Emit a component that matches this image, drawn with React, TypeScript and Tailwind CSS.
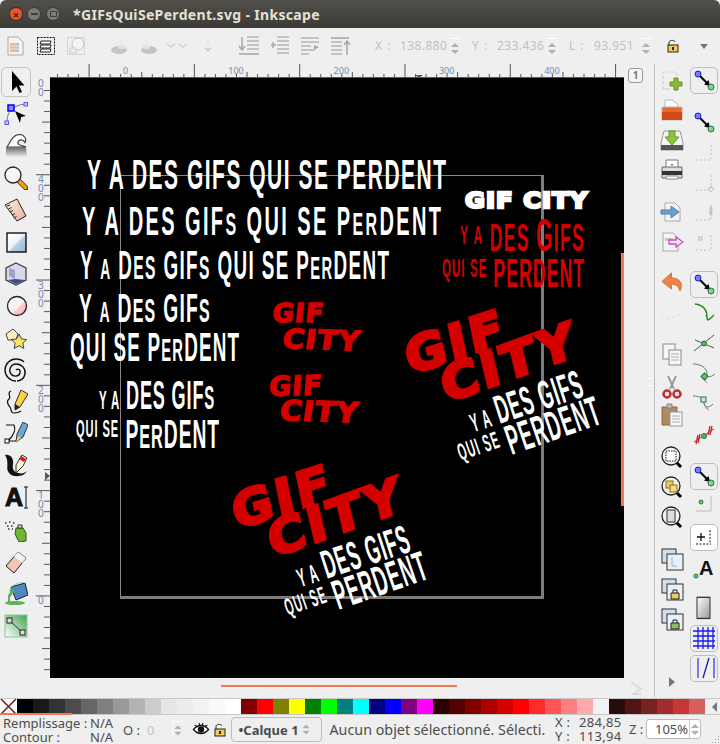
import { ReactNode } from "react";

const sans = "font-['Noto_Sans',sans-serif]";
// condensed poster lettering, squeezed from Liberation Sans Bold
const poster = "absolute whitespace-nowrap origin-top-left font-bold leading-none font-['Liberation_Sans',sans-serif]";
const logo = "absolute whitespace-nowrap origin-top-left font-bold leading-none font-['DejaVu_Sans',sans-serif] text-[#d40000]";
const bigLogo = `${logo} text-[48px] tracking-[3px] [-webkit-text-stroke:3px_#d40000] -skew-x-[6deg]`;
const smallLogo = `${logo} tracking-[1px] [-webkit-text-stroke:1.5px_#d40000]`;

const Ic = ({ children }: { children: ReactNode }) => (
  <svg width="24" height="24" viewBox="0 0 24 24" fill="none">
    {children}
  </svg>
);

const Doc = ({ x = 4 }: { x?: number }) => (
  <path d={`M${x} 3h10l5 5v13H${x}z`} fill="#f4f4f4" stroke="#aaa" />
);

const Lines = () => (
  <g stroke="#b5b5b5" strokeWidth="1.5">
    <path d="M9 3h12M9 7h12M9 11h12M9 15h12" />
  </g>
);

const toolbarIcons = [
  { cls: "ml-[4px]", el: <Ic><Doc /><path d="M6 9h9v9H6z" fill="#d9bdaa" /><path d="M6 12h9M6 15h9" stroke="#f2e6dc" /></Ic> },
  { cls: "ml-[6px]", el: <Ic><rect x="3.5" y="3.5" width="17" height="17" stroke="#111" strokeDasharray="2 1" /><path d="M7 7h10l-1 3H6zM7 11h10l-1 3H6zM7 15h10l-1 3H6z" fill="#fff" stroke="#222" /></Ic> },
  { cls: "ml-[6px]", el: <Ic><rect x="3.5" y="3.5" width="17" height="17" stroke="#c8c8c8" strokeDasharray="2 1" /><circle cx="14" cy="10" r="6" stroke="#c4c4c4" fill="#f4f4f4" /><path d="M6 14h6v5H6z" fill="#eee" stroke="#c8c8c8" /></Ic> },
  { cls: "ml-[20px]", el: <Ic><path d="M13 5c2 2 0 3 0 5" stroke="#ddd" /><ellipse cx="11" cy="16" rx="8" ry="4" fill="#c4c4c4" /><ellipse cx="14" cy="13" rx="4" ry="2" fill="#e2e2e2" /></Ic> },
  { cls: "ml-[4px]", el: <Ic><path d="M11 5c-2 2 0 3 0 5" stroke="#ddd" /><ellipse cx="13" cy="16" rx="8" ry="4" fill="#c4c4c4" /><ellipse cx="10" cy="13" rx="4" ry="2" fill="#e2e2e2" /></Ic> },
  { cls: "ml-[5px]", el: <Ic><path d="M2 10l4 3 4-3M14 10l4 3 4-3" stroke="#d0d0d0" strokeWidth="1.5" /></Ic> },
  { cls: "ml-[7px]", el: <Ic><path d="M12 6v6" stroke="#ddd" /><path d="M8 13l4 5 4-5-4 2z" fill="#c4c4c4" /></Ic> },
  { cls: "ml-[18px]", el: <Ic><Lines /><path d="M4 3v13M1 12l3 4 3-4" stroke="#a8a8a8" strokeWidth="1.5" /><path d="M1 20h20" stroke="#b5b5b5" strokeWidth="2" /></Ic> },
  { cls: "ml-[6px]", el: <Ic><Lines /><path d="M3 11h5M5 8v6" stroke="#a8a8a8" strokeWidth="1.5" /><path d="M9 19h12" stroke="#b5b5b5" strokeWidth="1.5" /></Ic> },
  { cls: "ml-[6px]", el: <Ic><path d="M3 4h18M3 8h18M3 12h10M3 16h14M3 20h8" stroke="#b5b5b5" strokeWidth="1.5" /><path d="M16 11l5 2-5 3z" fill="#a8a8a8" /></Ic> },
  { cls: "ml-[6px]", el: <Ic><path d="M3 4h18" stroke="#b5b5b5" strokeWidth="2" /><path d="M3 8h11M3 12h11M3 16h11M3 20h11" stroke="#b5b5b5" strokeWidth="1.5" /><path d="M19 21V8M16 11l3-4 3 4" stroke="#a8a8a8" strokeWidth="1.5" /></Ic> },
];

const toolIcons = [
  <Ic key="select"><path d="M8 1v20l4.500-4.500 3 6.500 2.500-1-3-6.500h5.500z" fill="#000" /></Ic>,
  <Ic key="node"><path d="M3 20C3 10 8 3 22 2" stroke="#777" /><rect x="4" y="3" width="6" height="6" fill="#8a8aff" stroke="#00f" strokeWidth="1.500" /><rect x="20" y="0.500" width="3.500" height="3.500" fill="#ccf" stroke="#55f" /><rect x="1" y="19" width="3.500" height="3.500" fill="#ccf" stroke="#55f" /><path d="M11 9l11 5-5 1-1 6z" fill="#000" /></Ic>,
  <Ic key="tweak"><defs><linearGradient id="tw" x1="0" y1="0" x2="0" y2="1"><stop offset="0" stopColor="#666" /><stop offset="1" stopColor="#eee" /></linearGradient></defs><path d="M3 13C6 9 8 1 15 0.500c5 0 8 4 6 8-1-3-6-4-7 0-1 2 3 3 8 4.500z" fill="#fff" stroke="#444" strokeWidth="1.200" /><path d="M2 13h20l1 10H2z" fill="url(#tw)" /></Ic>,
  <Ic key="zoom"><path d="M15 15l7 7" stroke="#333" strokeWidth="5" strokeLinecap="round" /><path d="M15.500 15.500l6 6" stroke="#eda21e" strokeWidth="3.500" strokeLinecap="round" /><circle cx="9" cy="9" r="8" fill="#f6f6f6" stroke="#222" strokeWidth="1.300" /></Ic>,
  <Ic key="measure"><defs><linearGradient id="me" x1="0" y1="0" x2="1" y2="1"><stop offset="0" stopColor="#f8f0ea" /><stop offset="1" stopColor="#f3a998" /></linearGradient></defs><path d="M1 7L13 1l9 17-9 5z" fill="url(#me)" stroke="#222" /><path d="M3 8l3-1M4.500 11l3-1.500M6 14l3-1.500M8 17l3-1.500M9.500 20l3-1.500" stroke="#222" /></Ic>,
  <Ic key="rect"><defs><linearGradient id="re" x1="0" y1="0" x2="1" y2="1"><stop offset="0" stopColor="#fff" /><stop offset=".5" stopColor="#eef3f8" /><stop offset=".55" stopColor="#bcd1e6" /><stop offset="1" stopColor="#8fb2d6" /></linearGradient></defs><rect x="3" y="3" width="19" height="19" fill="url(#re)" stroke="#000" strokeWidth="1.300" /></Ic>,
  <Ic key="box"><path d="M12 1l10 5v12l-10 5-10-5V6z" fill="#d8d8e8" stroke="#444" strokeWidth="1.300" /><path d="M5 6l6 2v9l-6-3z" fill="#9ca0cc" /><path d="M11 17l10 1-9 4-8-4z" fill="#3c4a94" /></Ic>,
  <Ic key="circle"><defs><linearGradient id="ci" x1="0" y1="0" x2="1" y2="1"><stop offset="0" stopColor="#fff" /><stop offset=".55" stopColor="#f6f0f0" /><stop offset=".62" stopColor="#fbc9c9" /><stop offset="1" stopColor="#f9a6a6" /></linearGradient></defs><circle cx="13" cy="12" r="9.500" fill="url(#ci)" stroke="#222" strokeWidth="1.300" /></Ic>,
  <Ic key="star"><path d="M2 8l7-5 5 5-2 6H4z" fill="#f9efc0" stroke="#444" /><path d="M15 8l2.500 5 5 .5-3.700 3.500 1 5.500-4.800-2.800-4.800 2.800 1-5.500-3.700-3.500 5-.5z" fill="#f5e56b" stroke="#444" /></Ic>,
  <Ic key="spiral"><path d="M12 12c2-2 5 0 4 3-1 4-7 4-9 1-3-4 0-10 5-10 6 0 10 5 9 10-1 5-5 7-8 7M12 23C6 23 1 18 1 12S6 1 12 1c4 0 6 1 8 3" stroke="#111" strokeWidth="1.400" /></Ic>,
  <Ic key="pencil"><path d="M7 1C2 3 8 7 5 9c-3 2-1 6 1 8 2 3 0 6 4 6 4 0 7-2 7-2" stroke="#111" strokeWidth="1.200" /><path d="M17 0l7 4-8 13-5 3 0-6z" fill="#f7d33e" stroke="#333" /><path d="M11 20l0-6 5 3z" fill="#222" /></Ic>,
  <Ic key="pen"><path d="M2 3h8c2 4 0 10-6 16h8" stroke="#111" strokeWidth="1.200" /><rect x="1" y="17" width="4" height="4" fill="#fff" stroke="#111" /><path d="M19 0l5 3-5 12-7 5 1-8z" fill="#6ca8d8" stroke="#333" /><path d="M12 20l2-6 3 2z" fill="#f0d050" /></Ic>,
  <Ic key="callig"><path d="M1 1c5-1 9 3 8 9-1 5 1 8 5 9 4 1 7 0 9-2-3 6-14 7-18 2C1 14 6 9 1 1z" fill="#111" /><path d="M18 1l5 3-4 8-7 7 0-8z" fill="#fff3da" stroke="#333" /><path d="M17 2l5 3-2 3-5-3z" fill="#c82020" /></Ic>,
  <Ic key="text"><text x="1" y="20" className="font-['Liberation_Sans',sans-serif] font-bold text-[25px]" fill="#111" stroke="#111" strokeWidth="1">A</text><path d="M20 1h4M22 1v21M20 22h4" stroke="#111" /></Ic>,
  <Ic key="spray"><path d="M12 10h7l3 5 0 8-7 1-4-8z" fill="#6fb53a" stroke="#2d5a12" /><path d="M14 7h4v3h-4z" fill="#ddd" stroke="#333" /><path d="M1 5h2M5 4h2M9 5h2M3 8h2M7 8h2M4 11h2M8 11h1" stroke="#333" strokeWidth="1.500" strokeDasharray="1.500 .5" /></Ic>,
  <Ic key="eraser"><path d="M2 16L14 2l8 6-12 15z" fill="#f6c4bb" stroke="#222" /><path d="M14 2l8 6-4 5-8-7z" fill="#f2f2f2" /></Ic>,
  <Ic key="bucket"><ellipse cx="11" cy="21" rx="10" ry="2" fill="#5fb05a" /><path d="M7 5l14-4 3 12-12 5z" fill="#4f88c0" stroke="#222" /><path d="M7 5c3-3 11-6 14-4" stroke="#9cc" /><path d="M7 5c-2 3 0 6-3 8v7h2v-5c3-2 2-5 5-4z" fill="#5fb05a" /></Ic>,
  <Ic key="grad"><defs><linearGradient id="gr" x1="0" y1="1" x2="1" y2="0"><stop offset="0" stopColor="#fff" /><stop offset="1" stopColor="#41a350" /></linearGradient></defs><rect x="1" y="1" width="22" height="22" fill="url(#gr)" stroke="#8cc596" /><path d="M6 7l12 11" stroke="#333" /><rect x="3" y="4" width="5" height="5" fill="#ddd" stroke="#222" /><rect x="16" y="16" width="5" height="5" fill="#ddd" stroke="#222" /></Ic>,
];

const ZoomLens = ({ children }: { children?: ReactNode }) => (
  <Ic>
    <path d="M16 17l5 5" stroke="#000" strokeWidth="3" />
    <circle cx="11" cy="11" r="9" fill="#f2f2f2" stroke="#222" strokeWidth="1.300" />
    {children}
  </Ic>
);

const Stack = ({ children }: { children?: ReactNode }) => (
  <Ic>
    <rect x="2" y="1" width="14" height="14" fill="#cfe0ee" stroke="#333" />
    <rect x="7" y="6" width="16" height="16" fill="#e9f1f7" stroke="#333" />
    {children}
  </Ic>
);

const commandIcons = [
  { cls: "mt-[4px]", el: <Ic><path d="M3 21V4h11l4 3" stroke="#ccc" strokeDasharray="3 2" /><path d="M3 21h7" stroke="#ccc" /><path d="M14 10h4v4h4v4h-4v4h-4v-4h-4v-4h4z" fill="#8cb83c" stroke="#668f22" /></Ic> },
  { cls: "mt-[6px]", el: <Ic><path d="M5 2h7l6 4v6H5z" fill="#fafafa" stroke="#bbb" /><path d="M2 9h20v13H2z" fill="#e8672a" stroke="#bbb" /><path d="M2 14h20v8H2z" fill="#d24a18" /></Ic> },
  { cls: "mt-[6px]", el: <Ic><path d="M4 3h16l3 12v7H1v-7z" fill="#f4f4f4" stroke="#999" /><path d="M1 17h22v5H1z" fill="#555" /><path d="M9 3h6v6h4l-7 8-7-8h4z" fill="#8fc23b" stroke="#5f9a1f" /></Ic> },
  { cls: "mt-[6px]", el: <Ic><path d="M6 2h12v8H6z" fill="#fff" stroke="#777" /><path d="M2 9h20v11H2z" fill="#ddd" stroke="#666" /><path d="M2 13h20v4H2z" fill="#333" /><path d="M6 18h12v3H6z" fill="#fff" stroke="#888" /><path d="M10 6h4l-2 2z" fill="#888" /></Ic> },
  { cls: "mt-[18px]", el: <Ic><Doc x={5} /><path d="M1 10h10V6l8 6-8 6v-4H1z" fill="#6c9fd0" stroke="#4f81b5" /></Ic> },
  { cls: "mt-[6px]", el: <Ic><Doc x={3} /><path d="M5 8h8v3H5z" fill="#d9bdaa" /><path d="M9 10h7V7l7 5-7 5v-3H9z" fill="#f4e4f4" stroke="#c44fc4" strokeWidth="1.300" /></Ic> },
  { cls: "mt-[17px]", el: <Ic><path d="M11 2L1 11l10 8v-5c4 0 7 1 9 7 3-6 2-13-9-14z" fill="#e9844a" stroke="#d96a28" transform="translate(1 0) scale(.95 .95)" /></Ic> },
  { cls: "mt-[8px]", el: <Ic><path d="M1 15h2M6 15h3M12 14h2M17 12h2M20 9h2" stroke="#d8d8d8" /></Ic> },
  { cls: "mt-[16px]", el: <Ic><rect x="3" y="1" width="12" height="15" fill="#f6f6f6" stroke="#8a8a8a" /><rect x="9" y="7" width="12" height="15" fill="#f6f6f6" stroke="#8a8a8a" /><path d="M11 11h8M11 14h8M11 17h8" stroke="#aaa" /></Ic> },
  { cls: "mt-[8px]", el: <Ic><path d="M8 1l6 13M16 1l-6 13" stroke="#999" strokeWidth="1.800" /><circle cx="7" cy="19" r="3.500" stroke="#c42c2c" strokeWidth="2.500" /><circle cx="17" cy="19" r="3.500" stroke="#c42c2c" strokeWidth="2.500" /></Ic> },
  { cls: "mt-[4px]", el: <Ic><path d="M2 4h15v18H2z" fill="#b08a62" stroke="#8a6a48" /><path d="M7 1h5v4H7z" fill="#bbb" stroke="#888" /><rect x="10" y="9" width="12" height="14" fill="#f7f7f7" stroke="#999" /><path d="M12 13h8M12 16h8M12 19h8" stroke="#aaa" /></Ic> },
  { cls: "mt-[18px]", el: <ZoomLens><rect x="6" y="6" width="10" height="10" fill="#fff" stroke="#222" strokeDasharray="1.500 1" /></ZoomLens> },
  { cls: "mt-[6px]", el: <ZoomLens><rect x="6" y="6" width="7" height="7" fill="#f0cf60" stroke="#8a6d20" /><rect x="10" y="10" width="7" height="7" fill="#f5dc80" stroke="#8a6d20" /></ZoomLens> },
  { cls: "mt-[6px]", el: <ZoomLens><rect x="7" y="5" width="8" height="12" fill="#ddd" stroke="#333" /></ZoomLens> },
  { cls: "mt-[19px]", el: <Stack><path d="M12 9v9h5" stroke="#8fb2d6" /></Stack> },
  { cls: "mt-[6px]", el: <Stack><path d="M11 15h8v6h-8z" fill="#f0cc60" stroke="#222" /><path d="M13 15v-3h4v3" stroke="#222" /></Stack> },
  { cls: "mt-[6px]", el: <Stack><path d="M11 15h8v6h-8z" fill="#8cc060" stroke="#222" /><path d="M13 15v-3h4v3" stroke="#222" /></Stack> },
  { cls: "mt-[38px]", el: <Ic><path d="M9 7v10l6-5z" fill="#777" /></Ic> },
];

const SnapArrow = () => (
  <Ic>
    <path d="M7 7l9 9" stroke="#000" strokeWidth="2" />
    <path d="M18 18l-6-1.500 4.500-4.500z" fill="#000" />
    <circle cx="6" cy="6" r="3" fill="#7a7aff" stroke="#1a1ad0" />
    <circle cx="19" cy="19" r="3" fill="#8fc7a0" stroke="#1d7a2c" />
  </Ic>
);

const Dashed = ({ children }: { children?: ReactNode }) => (
  <Ic>
    <path d="M4 20h15V5" stroke="#c0c0c0" strokeDasharray="2 2" />
    {children}
  </Ic>
);

const Boxed = ({ children, fill = "bg-[#efefef]" }: { children: ReactNode; fill?: string }) => (
  <div className={`w-[28px] h-[27px] flex items-center justify-center rounded-[5px] border border-[#bdbdbd] ${fill}`}>{children}</div>
);

const snapIcons = [
  { cls: "mt-[3px]", el: <Boxed><SnapArrow /></Boxed> },
  { cls: "mt-[16px]", el: <SnapArrow /> },
  { cls: "mt-[4px]", el: <Dashed /> },
  { cls: "mt-[4px]", el: <Dashed><path d="M19 16l3 3-3 3-3-3z" stroke="#bbb" /></Dashed> },
  { cls: "mt-[4px]", el: <Dashed><path d="M19 8v6" stroke="#c4c4c4" strokeWidth="3" strokeLinecap="round" /></Dashed> },
  { cls: "mt-[4px]", el: <Dashed><rect x="7" y="7" width="3" height="3" stroke="#bbb" /></Dashed> },
  { cls: "mt-[16px]", el: <Boxed><SnapArrow /></Boxed> },
  { cls: "mt-[3px]", el: <Ic><path d="M3 3c8 1 12 6 12 13 0 2 0 3 1 3 1 0 4-3 6-5M14 14l2 5" stroke="#1a8a1a" strokeWidth="1.300" /></Ic> },
  { cls: "mt-[4px]", el: <Ic><path d="M2 20l20-16M3 9l19 8" stroke="#555" /><circle cx="12" cy="12.500" r="2.500" fill="#5cae6a" stroke="#1d7a2c" /></Ic> },
  { cls: "mt-[4px]", el: <Ic><path d="M1 3c8 0 14 4 14 10 0 3 3 4 8 0M12 16c1 4 2 5 3 6" stroke="#777" /><rect x="10" y="13" width="5" height="5" transform="rotate(45 12.500 15.500)" fill="#6db87a" stroke="#1d7a2c" /></Ic> },
  { cls: "mt-[4px]", el: <Ic><path d="M1 5c6 0 11 2 11 7 0 4 4 6 9 1M12 12c1 4 3 6 5 7" stroke="#777" /><rect x="9" y="6" width="5" height="5" fill="#d6ecd6" stroke="#1d7a2c" /></Ic> },
  { cls: "mt-[6px]", el: <Ic><path d="M2 19l20-13" stroke="#555" /><path d="M6 12l-2 9M8 11l-2 9M18 3l-2 9M20 3l-2 9" stroke="#d02020" strokeWidth="1.300" /><circle cx="12" cy="13" r="2.500" fill="#5cae6a" stroke="#1d7a2c" /></Ic> },
  { cls: "mt-[15px]", el: <Boxed><SnapArrow /></Boxed> },
  { cls: "mt-[1px]", el: <Ic><circle cx="9" cy="11" r="2" fill="#7fc08a" stroke="#1d7a2c" /><path d="M4 20h15V5" stroke="#bbb" /></Ic> },
  { cls: "mt-[8px]", el: <Boxed fill="bg-white"><Ic><path d="M5 12h8M9 8v8" stroke="#111" strokeWidth="1.300" /><path d="M18 5v13M4 19h15" stroke="#111" strokeDasharray="2 1.500" /></Ic></Boxed> },
  { cls: "mt-[4px]", el: <Ic><text x="7" y="20" className="font-['Liberation_Sans',sans-serif] font-bold text-[20px]" fill="#111">A</text><circle cx="4" cy="21" r="2" fill="#7fc08a" stroke="#1d7a2c" /></Ic> },
  { cls: "mt-[15px]", el: <Ic><defs><linearGradient id="pg" x1="0" y1="0" x2="1" y2="1"><stop offset="0" stopColor="#fff" /><stop offset="1" stopColor="#999" /></linearGradient></defs><rect x="5" y="1" width="13" height="16" fill="url(#pg)" stroke="#333" transform="scale(1 1.320)" /></Ic> },
  { cls: "mt-[4px]", el: <Boxed><Ic><path d="M1 5h22M1 10h22M1 15h22M1 20h22M6 1v22M11 1v22M16 1v22M21 1v22" stroke="#1a1af0" strokeWidth="1.300" /></Ic></Boxed> },
  { cls: "mt-[4px]", el: <Boxed><Ic><path d="M6 2v20M22 2v20" stroke="#5a5af0" strokeWidth="1.600" /><path d="M11 22l6-20" stroke="#1a1aa0" strokeWidth="1.300" /></Ic></Boxed> },
];

const swatches = [
  "bg-[#000000]", "bg-[#1a1a1a]", "bg-[#333333]", "bg-[#4d4d4d]", "bg-[#666666]", "bg-[#808080]", "bg-[#999999]", "bg-[#b3b3b3]", "bg-[#cccccc]",
  "bg-[#e6e6e6]", "bg-[#ececec]", "bg-[#f2f2f2]", "bg-[#f9f9f9]", "bg-[#ffffff]",
  "bg-[#800000]", "bg-[#ff0000]", "bg-[#808000]", "bg-[#ffff00]", "bg-[#008000]", "bg-[#00ff00]", "bg-[#008080]", "bg-[#00ffff]", "bg-[#000080]", "bg-[#0000ff]", "bg-[#800080]", "bg-[#ff00ff]",
  "bg-[#2b0000]", "bg-[#550000]", "bg-[#800000]", "bg-[#aa0000]", "bg-[#d40000]", "bg-[#ff0000]", "bg-[#ff2a2a]", "bg-[#ff5555]", "bg-[#ff8080]", "bg-[#ffaaaa]", "bg-[#f2f2f2]",
  "bg-[#280b0b]", "bg-[#501616]", "bg-[#782121]", "bg-[#a02c2c]", "bg-[#c83737]", "bg-[#d35f5f]",
];

const range = (n: number) => Array.from({ length: n }, (_, i) => i);

// top ruler, x = 36..624
const TopRuler = () => (
  <svg width="588" height="14" className="block">
    <path d="M14 13.500H588" stroke="#555" />
    {range(57).map((i) => {
      const x = 21.5 + i * 10.53;
      const major = i % 10 === 3;
      return <path key={i} d={`M${x} ${major ? 0 : i % 5 === 3 ? 8 : 10}V14`} stroke="#555" />;
    })}
    <path d="M379 11h8l-4 3z" fill="#555" />
    {[0, 100, 200, 300, 400].map((v, i) => (
      <text key={v} x={87 + i * 105.3} y="10" className={`${sans} text-[9px]`} fill="#6d8db5">
        {v}
      </text>
    ))}
  </svg>
);

// left ruler, x = 36..50, y = 78..678
const LeftRuler = () => (
  <svg width="14" height="600" className="block shrink-0">
    {range(58).map((i) => {
      const y = 12.5 + i * 10.53;
      const major = i % 10 === 8;
      return <path key={i} d={major ? `M0 ${y}H14` : `M${i % 5 === 3 ? 6 : 8} ${y}H14`} stroke="#555" />;
    })}
    {[[96, "4"], [202, "3"], [307, "2"], [412, "1"]].map(([y, d]) => (
      <g key={d as string} className={`${sans} text-[10px]`} fill="#6d8db5">
        <text x="2" y={(y as number) + 9}>{d}</text>
        <text x="2" y={(y as number) + 18}>0</text>
        <text x="2" y={(y as number) + 27}>0</text>
      </g>
    ))}
    <text x="2" y="9" className={`${sans} text-[10px]`} fill="#6d8db5">0</text>
    <text x="2" y="18" className={`${sans} text-[10px]`} fill="#6d8db5">0</text>
    <text x="2" y="526" className={`${sans} text-[10px]`} fill="#6d8db5">0</text>
    <path d="M9 394l5 4-5 4z" fill="#555" />
  </svg>
);

const Spin = ({ dash = false }: { dash?: boolean }) => (
  <div className="flex flex-col items-center gap-[3px] w-[10px]">
    {dash && <div className="w-[10px] h-px bg-white mb-[1px]" />}
    <div className="w-0 h-0 border-x-[4px] border-x-transparent border-b-[4px] border-b-[#b0b0b0]" />
    <div className="w-0 h-0 border-x-[4px] border-x-transparent border-t-[4px] border-t-[#b0b0b0]" />
  </div>
);

const TinyLock = () => (
  <svg width="14" height="14" viewBox="0 0 14 14" fill="none">
    <path d="M3 6V3.500C3 1 8 .5 9 3" stroke="#222" />
    <rect x="2" y="6" width="10" height="7" fill="#f0cc50" stroke="#222" />
    <rect x="6" y="8" width="2" height="3" fill="#222" />
  </svg>
);

const Coord = ({ label, value, cls, valueCls }: { label: string; value: string; cls: string; valueCls: string }) => (
  <div className={`flex items-center ${cls}`}>
    <span className="w-[25px] tracking-[1px]">{label}</span>
    <span className={`${valueCls} tracking-[0.4px] whitespace-nowrap`}>{value}</span>
    <Spin dash />
  </div>
);

const Poster = () => (
  <>
    <div className={`${poster} text-white left-[37px] top-[76px] text-[42px] scale-x-[0.5] tracking-[3px]`}>Y A DES GIFS QUI SE PERDENT</div>
    <div className={`${poster} text-white left-[32px] top-[123px] text-[40px] scale-x-[0.5] tracking-[4.8px]`}>
      Y A DES GIF<span className="text-[32px]">S</span> QUI SE P<span className="text-[32px]">ER</span>DENT
    </div>
    <div className={`${poster} text-white left-[30px] top-[167px] text-[41px] scale-x-[0.46] tracking-[3px]`}>
      Y <span className="text-[30px]">A</span> D<span className="text-[34px]">ES</span> GIF<span className="text-[34px]">S</span> QUI SE P<span className="text-[32px]">ER</span>DENT
    </div>
    <div className={`${poster} text-white left-[29px] top-[210px] text-[41px] scale-x-[0.47] tracking-[2.7px]`}>
      Y <span className="text-[30px]">A</span> D<span className="text-[34px]">ES</span> GIF<span className="text-[34px]">S</span>
    </div>
    <div className={`${poster} text-white left-[20px] top-[249px] text-[41px] scale-x-[0.46] tracking-[2.6px]`}>
      QUI SE P<span className="text-[32px]">ER</span>DENT
    </div>
    <div className={`${poster} text-white left-[49px] top-[297px] text-[41px] scale-x-[0.44] tracking-[2px]`}>
      <span className="text-[26px]">Y A</span> DES GIF<span className="text-[34px]">S</span>
    </div>
    <div className={`${poster} text-white left-[26px] top-[336px] text-[40px] scale-x-[0.48] tracking-[2px]`}>
      <span className="text-[23px] align-[11px]">QUI SE</span> P<span className="text-[34px]">ER</span>DENT
    </div>

    <div className={`${logo} text-white tracking-[1px] [-webkit-text-stroke:2.5px_white] left-[415px] top-[112px] text-[22px] scale-x-[1.1]`}>GIF CITY</div>
    <div className={`${poster} text-[#d40000] left-[410px] top-[134px] text-[38px] scale-x-[0.46] tracking-[3px]`}>
      <span className="text-[26px] align-[7px]">Y A</span> DES <span className="text-[46px]">G</span>IFS
    </div>
    <div className={`${poster} text-[#d40000] left-[392px] top-[175px] text-[40px] scale-x-[0.44] tracking-[2.5px]`}>
      <span className="text-[26px] align-[10px]">QUI SE</span> PERDENT
    </div>

    <div className={`${smallLogo} left-[224px] top-[222px] text-[26px] -skew-x-[6deg]`}>GIF</div>
    <div className={`${smallLogo} left-[235px] top-[247px] text-[27px] scale-x-[1.08] rotate-[2deg] -skew-x-[6deg]`}>CITY</div>
    <div className={`${smallLogo} left-[220px] top-[295px] text-[27px] -rotate-[2deg] -skew-x-[6deg]`}>GIF</div>
    <div className={`${smallLogo} left-[232px] top-[319px] text-[28px] scale-x-[1.06] rotate-[2deg] -skew-x-[6deg]`}>CITY</div>

    <div className={`${bigLogo} left-[351px] top-[256px] -rotate-[18deg] scale-x-[1.05] [text-shadow:2px_2px_0_#a00000]`}>GIF</div>
    <div className={`${bigLogo} left-[386px] top-[285px] -rotate-[20deg] scale-x-[1.08] [text-shadow:2px_2px_0_#a00000]`}>CITY</div>
    <div className={`${poster} text-white left-[413px] top-[322px] text-[40px] scale-x-[0.45] tracking-[2px] -rotate-[18deg]`}>
      <span className="text-[26px]">Y A</span> DES GIFS
    </div>
    <div className={`${poster} text-white left-[403px] top-[360px] text-[42px] scale-x-[0.45] tracking-[2.5px] -rotate-[19deg]`}>
      <span className="text-[24px] align-[11px]">QUI SE</span> PERDENT
    </div>

    <div className={`${bigLogo} left-[178px] top-[411px] -rotate-[18deg] scale-x-[1.05]`}>GIF</div>
    <div className={`${bigLogo} left-[213px] top-[440px] -rotate-[20deg] scale-x-[1.08]`}>CITY</div>
    <div className={`${poster} text-white left-[240px] top-[477px] text-[40px] scale-x-[0.45] tracking-[2px] -rotate-[18deg]`}>
      <span className="text-[26px]">Y A</span> DES GIFS
    </div>
    <div className={`${poster} text-white left-[230px] top-[515px] text-[42px] scale-x-[0.45] tracking-[2.5px] -rotate-[19deg]`}>
      <span className="text-[24px] align-[11px]">QUI SE</span> PERDENT
    </div>
  </>
);

export default function App() {
  return (
    <div className={`w-[720px] h-[744px] overflow-hidden flex flex-col bg-[#efefef] text-[#4c4c4c] ${sans}`}>
      {/* title bar */}
      <div className="h-[28px] shrink-0 flex items-center rounded-t-[6px] bg-gradient-to-b from-[#504f4a] to-[#3c3b36]">
        <div className="ml-[9px] w-[14px] h-[14px] rounded-full bg-[#e9562b] border border-[#3a2a20] flex items-center justify-center text-[#3b2016] text-[11px] font-bold leading-none">×</div>
        <div className="ml-[4px] w-[14px] h-[14px] rounded-full bg-[#7c7b76] border border-[#3a3a36] flex items-center justify-center">
          <div className="w-[7px] h-[2px] bg-[#3f3e3a]" />
        </div>
        <div className="ml-[5px] w-[14px] h-[14px] rounded-full bg-[#7c7b76] border border-[#3a3a36] flex items-center justify-center">
          <div className="w-[7px] h-[6px] border border-[#3f3e3a]" />
        </div>
        <span className="ml-[13px] text-[14px] font-bold text-[#e4e0d6] tracking-[0.33px]">*GIFsQuiSePerdent.svg - Inkscape</span>
      </div>

      {/* command bar */}
      <div className="h-[36px] shrink-0 flex items-center relative">
        {toolbarIcons.map((t, i) => (
          <div key={i} className={t.cls}>{t.el}</div>
        ))}
        <div className="ml-[23px] flex items-center text-[12px] text-[#c9c0b8]">
          <Coord label="X :" value="138.880" cls="" valueCls="w-[50px]" />
          <Coord label="Y :" value="233.436" cls="ml-[12px]" valueCls="w-[50px]" />
          <Coord label="L :" value="93.951" cls="ml-[12px]" valueCls="w-[47px]" />
        </div>
        <div className="ml-[15px]"><TinyLock /></div>
        <div className="ml-[20px] w-0 h-0 border-x-[4px] border-x-transparent border-t-[5px] border-t-[#777]" />
      </div>

      {/* workspace */}
      <div className="h-[634px] shrink-0 flex">
        <div className="w-[36px] shrink-0 flex flex-col pt-[2px]">
          {toolIcons.map((el, i) => (
            <div key={i} className="w-[32px] h-[32px] flex items-center justify-center shrink-0">
              {i === 0 ? (
                <div className="w-[30px] h-[30px] flex items-center justify-center rounded-[5px] border border-[#c4c4c4]">{el}</div>
              ) : (
                el
              )}
            </div>
          ))}
        </div>

        <div className="w-[618px] shrink-0 flex flex-col">
          <div className="flex h-[14px]">
            <TopRuler />
            <div className="ml-[4px] mt-[4px] w-[15px] h-[15px] rounded-[3px] border border-[#999] bg-[#f4f4f4] text-[#777] text-[10px] leading-[13px] text-center font-bold z-10">1</div>
          </div>
          <div className="flex h-[600px]">
            <LeftRuler />
            <div className="relative w-[574px] h-[600px] bg-black overflow-hidden shrink-0">
              <div className="absolute left-[70px] top-[97px] w-[424px] h-[424px] border-l border-t border-l-[#888] border-t-[#888] border-r-[3px] border-b-[3px] border-r-[#7c7c7c] border-b-[#7c7c7c]" />
              <Poster />
              <div className="absolute left-[571px] top-[175px] w-[3px] h-[253px] bg-[#ef7a4d]" />
            </div>
            <div className="relative w-[30px]">
              <div className="absolute right-[1px] top-[300px] w-[5px] h-[8px] border-y border-[#fff]" />
            </div>
          </div>
          <div className="h-[20px] relative">
            <div className="ml-[185px] mt-[7px] w-[236px] h-[2px] bg-[#ef7a4d]" />
            <svg width="16" height="16" viewBox="0 0 16 16" fill="none" className="absolute left-[594px] top-[3px]">
              <path d="M1 1l10 7-8 5h8" stroke="#d8d8d8" strokeWidth="1.500" />
            </svg>
          </div>
        </div>

        <div className="w-px shrink-0 bg-[#c2c2bc] mb-[1px]" />

        <div className="w-[35px] shrink-0 flex flex-col items-center pr-[1px]">
          {commandIcons.map((c, i) => (
            <div key={i} className={`h-[24px] shrink-0 flex items-center ${c.cls}`}>{c.el}</div>
          ))}
        </div>
        <div className="w-[30px] shrink-0 flex flex-col items-center pr-[2px]">
          {snapIcons.map((c, i) => (
            <div key={i} className={`h-[26px] shrink-0 flex items-center ${c.cls}`}>{c.el}</div>
          ))}
        </div>
      </div>

      {/* palette */}
      <div className="h-[17px] shrink-0 relative flex items-stretch border-y border-[#c8c8c8]">
        <svg width="17" height="15" viewBox="0 0 17 15" className="shrink-0 bg-white">
          <path d="M1 0l15 15M16 0L1 15" stroke="#7a1a1a" strokeWidth="1.500" />
        </svg>
        {swatches.map((c, i) => (
          <div key={i} className={`w-[16px] shrink-0 ${c}`} />
        ))}
        <div className="ml-[7px] mt-[3px] w-0 h-0 border-y-[5px] border-y-transparent border-r-[5px] border-r-[#777]" />
        <div className="absolute left-0 bottom-[-1px] w-[72px] h-[2px] bg-[#ef7a4d]" />
      </div>

      {/* status bar */}
      <div className="flex-1 flex items-center text-[13px] leading-[14px] relative">
        <div className="w-[120px] shrink-0 pl-[3px] grid grid-cols-[87px_1fr]">
          <span>Remplissage :</span>
          <span>N/A</span>
          <span>Contour :</span>
          <span>N/A</span>
        </div>
        <span className="ml-[3px]">O :</span>
        <span className="ml-[7px] text-[#c9c0b8]">0</span>
        <div className="ml-[17px] w-[13px] h-[20px] flex items-center justify-center rounded-[2px] border-t border-l border-white scale-90"><Spin /></div>
        <svg width="18" height="15" viewBox="0 0 16 14" fill="none" className="ml-[8px]">
          <path d="M1 7c4-5 10-5 14 0-4 5-10 5-14 0z" fill="#fff" stroke="#111" strokeWidth="1.300" />
          <circle cx="8" cy="7" r="3" fill="#111" />
          <path d="M2 3l2 1M6 1l1 2M10 1l-1 2M14 3l-2 1" stroke="#111" />
        </svg>
        <div className="ml-[3px]"><TinyLock /></div>
        <div className="ml-[4px] w-[91px] h-[25px] flex items-center justify-between pl-[6px] pr-[10px] rounded-[4px] border border-[#bdbdbd] font-bold">
          <span>•Calque 1</span>
          <div className="scale-90"><Spin /></div>
        </div>
        <span className="ml-[7px] text-[14.3px] whitespace-nowrap">Aucun objet sélectionné. Sélecti.</span>
        <div className="absolute left-[555px] top-0 grid grid-cols-[24px_44px] tracking-[0.3px]">
          <span>X :</span>
          <span>284,85</span>
          <span>Y :</span>
          <span>113,94</span>
        </div>
        <span className="absolute left-[629px] top-[7px]">Z :</span>
        <div className="absolute left-[646px] top-[4px] w-[55px] h-[20px] flex items-center bg-white border border-[#bdbdbd] rounded-[3px]">
          <span className="w-[44px] pl-[8px] overflow-hidden">105%</span>
          <div className="flex-1 self-stretch border-l border-[#ccc] flex items-center justify-center"><Spin /></div>
        </div>
        <svg width="10" height="10" viewBox="0 0 10 10" className="absolute right-0 bottom-0">
          <path d="M8 2h1v1H8zM5 5h1v1H5zM8 5h1v1H8zM2 8h1v1H2zM5 8h1v1H5zM8 8h1v1H8z" fill="#aaa" />
        </svg>
      </div>
    </div>
  );
}
